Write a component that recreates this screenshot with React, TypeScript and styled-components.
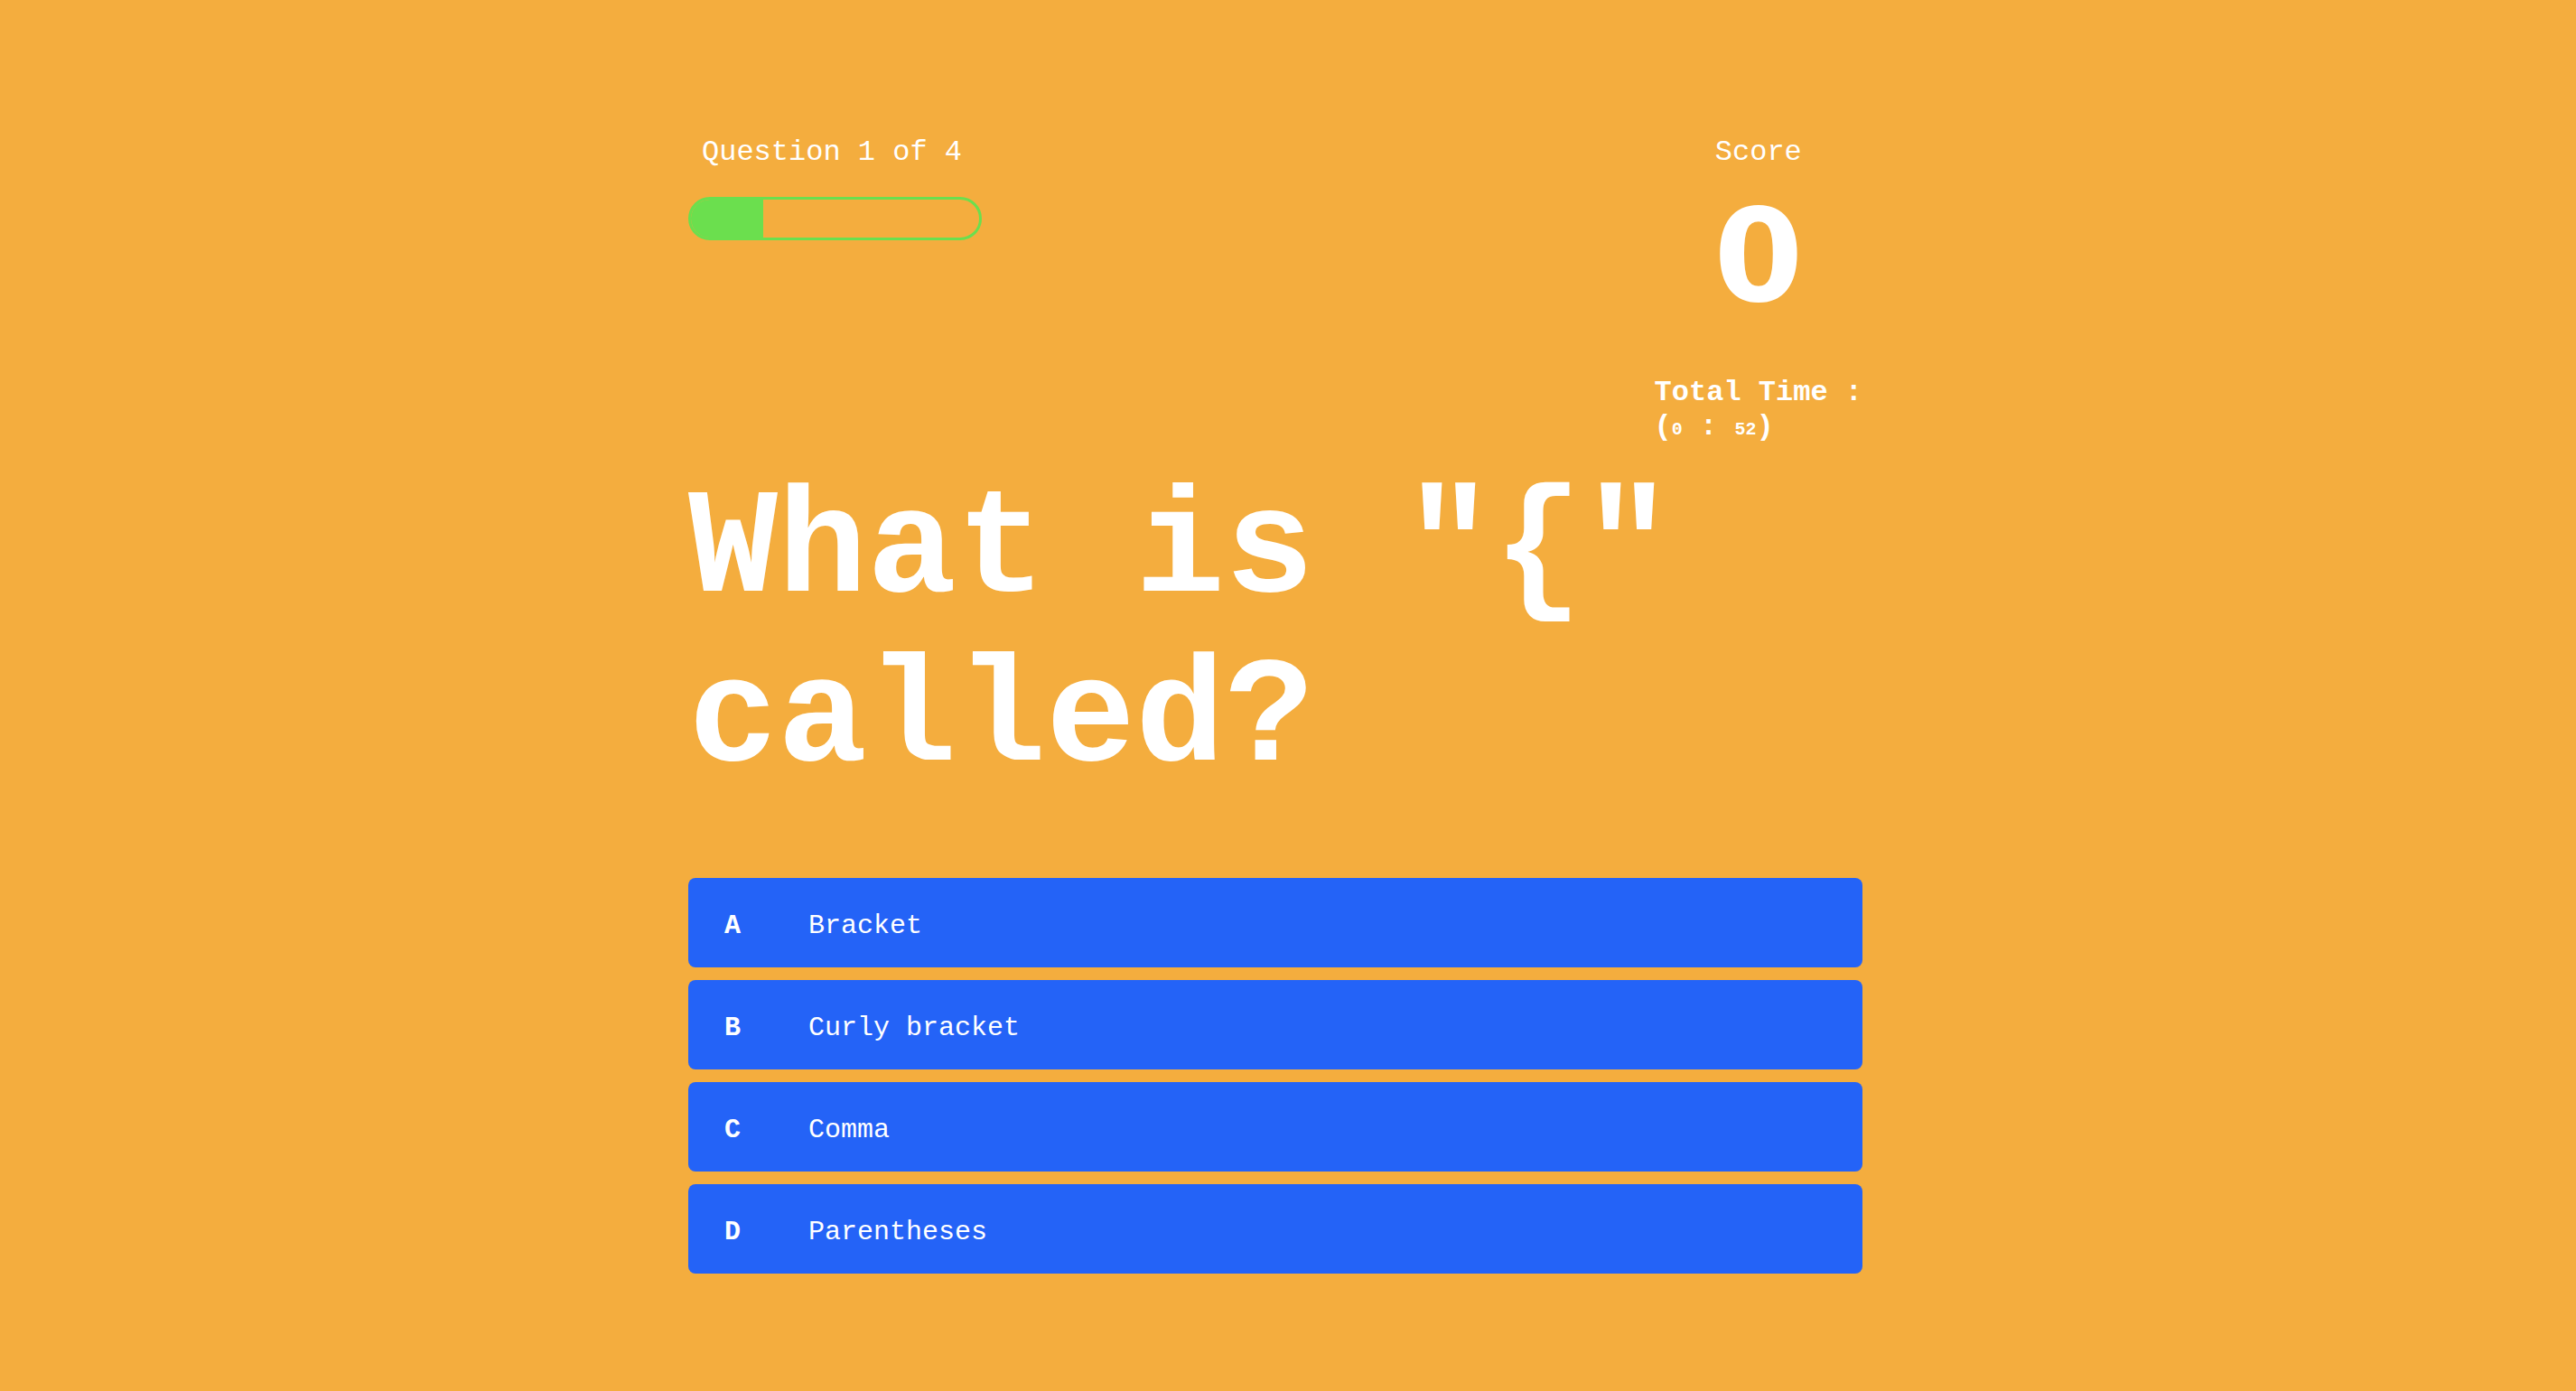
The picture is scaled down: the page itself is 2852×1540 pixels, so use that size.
import styled, { createGlobalStyle } from 'styled-components';

const GlobalStyle = createGlobalStyle`
  html, body {
    margin: 0;
    padding: 0;
    background-color: #f4ad3e;
  }

  * {
    box-sizing: border-box;
  }
`;

const options = [
  { letter: 'A', text: 'Bracket' },
  { letter: 'B', text: 'Curly bracket' },
  { letter: 'C', text: 'Comma' },
  { letter: 'D', text: 'Parentheses' },
];

const current = 1;
const total = 4;

const App = () => {
  return (
    <Page>
      <GlobalStyle />
      <Quiz>
        <Header>
          <ProgressColumn>
            <QuestionCount>
              Question {current} of {total}
            </QuestionCount>
            <ProgressTrack>
              <ProgressFill style={{ width: `${(current / total) * 100}%` }} />
            </ProgressTrack>
          </ProgressColumn>

          <ScoreColumn>
            <ScoreLabel>Score</ScoreLabel>
            <ScoreValue>0</ScoreValue>
            <Timer>
              <TimerTitle>Total Time :</TimerTitle>
              <TimerValue>
                (<TimerDigits>0</TimerDigits> : <TimerDigits>52</TimerDigits>)
              </TimerValue>
            </Timer>
          </ScoreColumn>
        </Header>

        <QuestionText>What is "{'{'}" called?</QuestionText>

        <OptionList>
          {options.map((option) => (
            <OptionButton key={option.letter}>
              <OptionLetter>{option.letter}</OptionLetter>
              <OptionText>{option.text}</OptionText>
            </OptionButton>
          ))}
        </OptionList>
      </Quiz>
    </Page>
  );
};

export default App;

// Styled Components
const Page = styled.div`
  min-height: 100vh;
  width: 100%;
  display: flex;
  justify-content: center;
  padding: 150px 28px 0 0;
  background-color: #f4ad3e;
  color: #ffffff;
  font-family: 'Courier New', 'Liberation Mono', monospace;
`;

const Quiz = styled.div`
  width: 1300px;
  display: flex;
  flex-direction: column;
`;

const Header = styled.div`
  display: flex;
  flex-direction: row;
  justify-content: space-between;
  align-items: flex-start;
`;

const ProgressColumn = styled.div`
  display: flex;
  flex-direction: column;
  gap: 31px;
`;

const QuestionCount = styled.p`
  margin: 0;
  padding-left: 15px;
  font-size: 32px;
  font-weight: 400;
`;

const ProgressTrack = styled.div`
  width: 325px;
  height: 48px;
  border: 3px solid #6bdf4e;
  border-radius: 24px;
  overflow: hidden;
`;

const ProgressFill = styled.div`
  height: 100%;
  background-color: #6bdf4e;
`;

const ScoreColumn = styled.div`
  display: flex;
  flex-direction: column;
  align-items: center;
`;

const ScoreLabel = styled.p`
  margin: 0;
  font-size: 32px;
  font-weight: 400;
`;

const ScoreValue = styled.p`
  margin: 26px 0 0;
  font-family: 'DejaVu Sans', 'Liberation Sans', sans-serif;
  font-size: 142px;
  font-weight: 700;
  line-height: 1;
`;

const Timer = styled.div`
  margin-top: 61px;
  display: flex;
  flex-direction: column;
  align-items: flex-start;
  font-size: 32px;
  font-weight: 700;
  line-height: 38px;
`;

const TimerTitle = styled.span`
  white-space: pre;
`;

const TimerValue = styled.span`
  white-space: pre;
`;

const TimerDigits = styled.span`
  font-size: 20px;
`;

const QuestionText = styled.h1`
  margin: 22px 0 0;
  font-size: 165px;
  font-weight: 700;
  line-height: normal;
`;

const OptionList = styled.div`
  margin-top: 81px;
  display: flex;
  flex-direction: column;
  gap: 14px;
`;

const OptionButton = styled.div`
  height: 99px;
  display: flex;
  flex-direction: row;
  align-items: center;
  padding: 7px 40px 0;
  border-radius: 8px;
  background-color: #2463f7;
  cursor: pointer;
`;

const OptionLetter = styled.span`
  width: 93px;
  font-size: 30px;
  font-weight: 700;
`;

const OptionText = styled.span`
  font-size: 30px;
  font-weight: 400;
`;
